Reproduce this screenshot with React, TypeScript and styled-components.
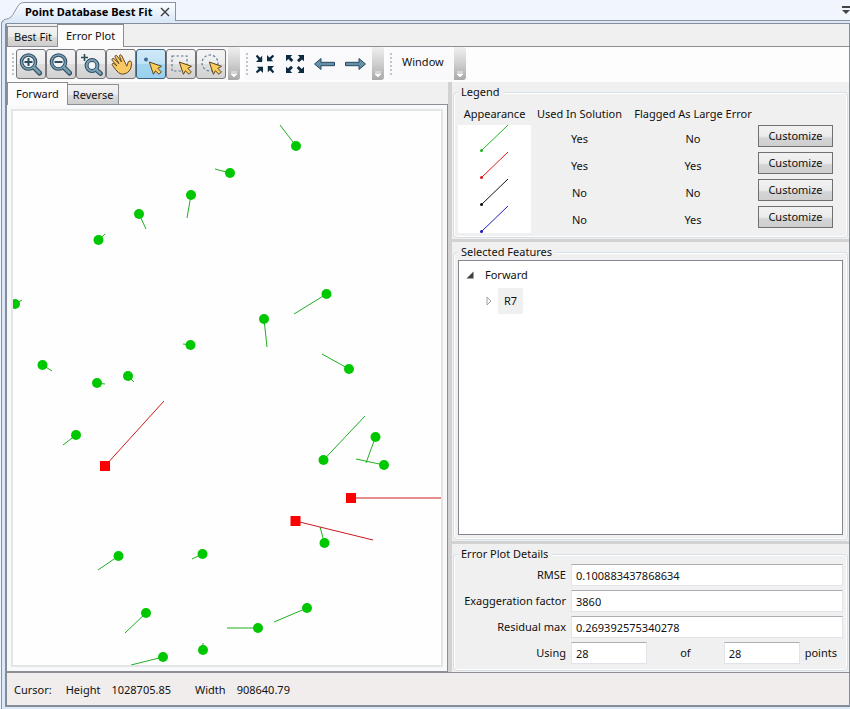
import React from "react";
import styled, { createGlobalStyle, css } from "styled-components";

const Global = createGlobalStyle`
  *, *::before, *::after { box-sizing: border-box; }
  html, body { margin: 0; padding: 0; }
  body, button, input {
    font-family: "Noto Sans", "Open Sans", sans-serif;
    font-size: 11px;
    line-height: 16px;
    color: #111;
  }
  button, input { margin: 0; padding: 0; }
`;

const face = "#f0f0f0";
const line = "#8c8e94";

const Page = styled.div`
  display: flex;
  flex-direction: column;
  height: 100vh;
  min-height: 600px;
  background: #f1f5fe;
`;

/* ---------- document tab strip ---------- */

const DocStrip = styled.div`
  display: flex;
  align-items: flex-end;
  justify-content: space-between;
  height: 20px;
  padding-left: 4px;
  z-index: 1;
`;

const DocTab = styled.div`
  display: flex;
  align-items: flex-end;
  height: 19px;
  margin-bottom: -1px;
`;

const DocTabBody = styled.div`
  display: flex;
  align-items: center;
  gap: 8px;
  height: 19px;
  margin-left: -3px;
  padding-right: 5px;
  border: solid #8a92a6;
  border-width: 1px 1px 0 0;
  background: linear-gradient(#fbfdff, #dce8f8);
  font-weight: 700;
  color: #000;
  white-space: nowrap;
`;

const BareButton = styled.button`
  display: flex;
  align-items: center;
  justify-content: center;
  border: 0;
  background: none;
`;

const Frame = styled.div`
  display: flex;
  flex: 1;
  min-height: 0;
  margin-left: 1px;
  padding: 2px 0 2px 3px;
  border: solid #8a92a6;
  border-width: 1px 0 0 1px;
  border-top-left-radius: 4px;
  background: #dbe8f8;
`;

const Window = styled.div`
  display: flex;
  flex: 1;
  flex-direction: column;
  min-width: 0;
  border: solid #868c98;
  border-width: 1px 1px 2px 2px;
  border-top-left-radius: 2px;
  background: ${face};
`;

/* ---------- tabs ---------- */

const TabRow = styled.div`
  display: flex;
  align-items: flex-end;
  height: 23px;
  border-bottom: 1px solid ${line};
`;

const Tab = styled.button<{ $active?: boolean }>`
  height: 20px;
  padding: 0 5px;
  border: 1px solid ${line};
  border-bottom: 0;
  background: linear-gradient(#f3f3f3, #ebebeb 50%, #dddddd 50%, #cdcdcd);
  white-space: nowrap;
  ${(p) =>
    p.$active &&
    css`
      height: 23px;
      margin-bottom: -1px;
      padding: 0 8px;
      background: #fcfcfc;
    `}
`;

const TabLead = styled(Tab)`
  margin-right: -1px;
  padding-left: ${(p) => (p.$active ? 8 : 6)}px;
`;

/* ---------- toolbar ---------- */

const ToolTray = styled.div`
  display: flex;
  gap: 4px;
  height: 35px;
  padding: 0 3px 2px;
  background: #fdfdfd;
`;

const ToolGroup = styled.div`
  display: flex;
  align-items: center;
  height: 33px;
  border-radius: 3px;
  background: linear-gradient(#fbfafc, #f9f9fb);
`;

const Grip = styled.span`
  width: 2px;
  height: 22px;
  margin: 0 2px;
  background: repeating-linear-gradient(#c4c4c8 0 2px, transparent 2px 4px);
`;

const Tools = styled.div`
  display: flex;
`;

const ToolButton = styled.button<{ $on?: boolean; $flat?: boolean }>`
  display: flex;
  align-items: center;
  justify-content: center;
  width: 30px;
  height: 30px;
  border: 1px solid #75757a;
  border-radius: 3px;
  background: linear-gradient(#f4f4f4, #ececec 50%, #dedede 50%, #d2d2d2);
  ${(p) =>
    p.$on &&
    css`
      border-color: #3e5f78;
      background: linear-gradient(#cfe9f8, #bfe2f5 50%, #a3d6f0 50%, #98d0ee);
    `}
  ${(p) =>
    p.$flat &&
    css`
      border-color: transparent;
      background: none;
    `}
`;

const OverflowButton = styled.button`
  display: flex;
  align-items: flex-end;
  justify-content: center;
  align-self: stretch;
  width: 12px;
  margin-left: 2px;
  padding-bottom: 2px;
  border: 0;
  border-radius: 0 3px 3px 0;
  background: linear-gradient(#f0f0f0, #cfcfcf 50%, #a9a9a9);
`;

const MenuButton = styled.button`
  align-self: flex-start;
  height: 30px;
  padding: 0 8px;
  border: 0;
  background: none;
`;

/* ---------- main area ---------- */

const Main = styled.div`
  display: grid;
  grid-template-columns: minmax(0, 441fr) 4px minmax(0, 397fr);
  flex: 1;
  min-height: 0;
`;

const PlotSide = styled.div`
  display: flex;
  flex-direction: column;
  min-height: 0;
`;

const PlotPane = styled.div`
  display: flex;
  flex: 1;
  min-height: 0;
  padding: 4px;
  border: solid ${line};
  border-width: 0 1px 1px 0;
  background: #f8f9fa;
`;

const PlotSurface = styled.div`
  flex: 1;
  min-width: 0;
  border: 2px solid #e5e5e5;
  background: #fefefe;
  svg { display: block; width: 100%; height: 100%; }
`;

const Splitter = styled.div`
  min-height: 3px;
  background: #d2d2d2;
`;

const Side = styled.div`
  display: flex;
  flex-direction: column;
  min-height: 0;
`;

const Group = styled.fieldset<{ $grow?: boolean }>`
  display: flex;
  flex-direction: column;
  flex: ${(p) => (p.$grow ? "1" : "none")};
  min-width: 0;
  min-height: 0;
  margin: 2px 1px 1px;
  padding: 0 4px 4px;
  border: 1px solid #d5dfe5;
  border-radius: 4px;
  box-shadow: inset 0 0 0 1px #fff;
  legend {
    height: 16px;
    padding: 0 4px 0 3px;
    background: ${face};
  }
`;

const LegendTable = styled.table`
  width: 375px;
  margin-top: 2px;
  border-collapse: collapse;
  table-layout: fixed;
  th, td { padding: 0; font-weight: 400; text-align: center; white-space: nowrap; }
  th { height: 23px; }
  td { height: 27px; }
  td:first-child { background: #fff; }
  svg { display: block; }
`;

const Push = styled.button`
  display: block;
  width: 75px;
  height: 22px;
  margin-bottom: 5px;
  border: 1px solid #707070;
  background: linear-gradient(#f2f2f2, #ebebeb 50%, #d2d4d6 60%, #cfcfcf);
`;

const Tree = styled.ul`
  flex: 1;
  min-height: 0;
  margin: 0;
  padding: 1px 6px;
  overflow: auto;
  border: 1px solid #828790;
  background: #fff;
  list-style: none;
  ul { margin: 0; padding: 0 0 0 19px; list-style: none; }
`;

const TreeRow = styled.div`
  display: flex;
  align-items: center;
  gap: 5px;
  height: 26px;
`;

const TreeLabel = styled.span<{ $selected?: boolean }>`
  padding: 5px 6px;
  background: ${(p) => (p.$selected ? "#f0f0f0" : "transparent")};
`;

const Toggle = styled(BareButton)`
  width: 9px;
  height: 16px;
`;

const Details = styled.div`
  display: grid;
  grid-template-columns: 108px minmax(0, 1fr);
  gap: 4px 5px;
  padding: 2px 0;
  label { line-height: 22px; text-align: right; white-space: nowrap; }
`;

const Field = styled.input`
  width: 100%;
  height: 22px;
  padding: 0 4px;
  border: 1px solid #e2e3ea;
  border-top-color: #abadb3;
  background: #fff;
`;

const Counts = styled.div`
  display: grid;
  grid-template-columns: 76px 1fr 76px auto;
  align-items: center;
  text-align: center;
  span:last-child { padding: 0 6px 0 5px; }
`;

const StatusBar = styled.footer`
  display: flex;
  align-items: center;
  gap: 14px;
  height: 33px;
  padding: 2px 0 0 7px;
  border-top: 1px solid ${line};
  background: #f0edec;
`;

const StatusPair = styled.div`
  display: flex;
  gap: 11px;
  margin-right: 10px;
`;

/* ---------- icons ---------- */

const ink = "#2c4c60";
const steel = "#7d9fb3";

const Icon = ({ children }: { children: React.ReactNode }) => (
  <svg width="24" height="24" viewBox="0 0 24 24" fill="none" aria-hidden="true">
    {children}
  </svg>
);

const Lens = ({ sign }: { sign: string }) => (
  <Icon>
    <path d="M14.5 15 20.5 21" stroke={ink} strokeWidth="5" strokeLinecap="round" />
    <circle cx="9.5" cy="10" r="7" fill="#eef2f4" stroke={ink} strokeWidth="3.6" />
    <circle cx="9.5" cy="10" r="7" stroke={steel} strokeWidth="1.6" />
    <path d="M14.8 15.2 20.4 20.8" stroke={steel} strokeWidth="2.8" strokeLinecap="round" />
    <path d={sign} stroke={ink} strokeWidth="2" />
  </Icon>
);

const LensBox = () => (
  <Icon>
    <path d="M2 5.500h7M5.500 2v7" stroke={ink} strokeWidth="1.6" />
    <path d="M17 17.500 21.500 21.500" stroke={ink} strokeWidth="4.6" strokeLinecap="round" />
    <circle cx="13" cy="13.500" r="5.4" fill="#f3f5f6" stroke={ink} strokeWidth="4" />
    <circle cx="13" cy="13.500" r="5.4" stroke={steel} strokeWidth="2" />
    <path d="M17 17.500 21.300 21.300" stroke={steel} strokeWidth="2.6" strokeLinecap="round" />
  </Icon>
);

const Hand = () => (
  <Icon>
    <path
      d="M3.6 13.5c-1.3-1.7.4-2.8 1.6-1.7L8 14 3.4 8.6c-1.2-1.6.6-3 1.9-1.6L10 11.6 6.2 5.4c-1-1.8 1-2.8 2-1.3L12.6 10 10.6 4.5c-.6-1.8 1.3-2.5 2.1-.8L16 10.5c.7 1.5 1.3 2.7 1.7 3.7 1-1.4.7-2.6 1.5-4.2.8-1.5 3-1.2 3.3.4.3 1.5-.2 3.2-.6 5.2-.5 2.6-2.6 4.6-4.8 5.7-2.4 1.1-5.6 1.2-7.8-.8-2-1.9-4.1-4.7-5.7-7z"
      fill="#fbc963"
      stroke="#5b4520"
      strokeWidth="1"
      strokeLinejoin="round"
    />
  </Icon>
);

const Arrow = () => (
  <path
    d="M10.3 10 22.5 14.3 18.8 16.4 22.3 19.9 20 22.3 16.4 18.8 14.4 22.3Z"
    fill="#fccb5d"
    stroke="#5b4520"
    strokeWidth="1"
    strokeLinejoin="round"
  />
);

const PickPoint = () => (
  <Icon>
    <circle cx="7" cy="7.5" r="2" fill="#3b6a96" />
    <Arrow />
  </Icon>
);

const PickBox = () => (
  <Icon>
    <path d="M3 4h15v15H3z" stroke="#5f7c93" strokeWidth="1.2" strokeDasharray="2.5 2" />
    <Arrow />
  </Icon>
);

const PickCircle = () => (
  <Icon>
    <circle cx="11" cy="11" r="8" stroke="#5f7c93" strokeWidth="1.2" strokeDasharray="2.5 2" />
    <Arrow />
  </Icon>
);

const inArrow = "M2.8 4.2 4.2 2.8 7.2 5.8 9.2 3.8V10H3L5.400 7.600Z";
const outArrow = "M3 3H9.200L7.400 5 10.300 8 8.300 10 5.300 7.100 3 9.200Z";

const FourArrows = ({ d }: { d: string }) => (
  <Icon>
    {[0, 90, 180, 270].map((a) => (
      <path key={a} d={d} fill="#0b2c40" transform={`rotate(${a} 12 12)`} />
    ))}
  </Icon>
);

const LongArrow = ({ flip }: { flip?: boolean }) => (
  <Icon>
    <path
      d="M1.5 12 8 6.5V10.3H21.5V13.7H8V17.5Z"
      fill="#6590aa"
      stroke="#28485c"
      strokeWidth="1"
      strokeLinejoin="round"
      transform={flip ? "rotate(180 12 12)" : undefined}
    />
  </Icon>
);

const Overflow = () => (
  <OverflowButton aria-label="More tools">
    <svg width="8" height="7" viewBox="0 0 8 7" aria-hidden="true">
      <path d="M1 1h6M1 3h6L4 6z" fill="#fff" stroke="#fff" strokeWidth=".8" />
    </svg>
  </OverflowButton>
);

/* ---------- plot data: marker x, y, residual end x, y ---------- */

const points: [number, number, number, number][] = [
  [283, 35, 267, 14], [217, 62, 202, 58], [178, 84, 174, 107], [126, 103, 133, 118],
  [85.5, 129, 92, 123], [2, 193, 9, 189], [313.5, 183, 281, 203], [251, 208, 254, 236],
  [177.5, 234, 170, 233], [29.5, 254, 39, 260], [84, 272, 92, 273], [115, 265, 121, 271],
  [336, 258, 309, 243], [63, 324, 50, 334], [310.5, 349, 352, 305], [362.5, 326, 353, 352],
  [371, 354, 343, 348], [311.5, 432, 307, 416], [105.5, 445, 85, 459], [189.5, 443, 179, 448],
  [133, 502, 112, 522], [294, 497, 261, 511], [245, 517, 214, 517], [190, 539, 190, 532],
  [150, 546, 118, 554],
];

const outliers: [number, number, number, number][] = [
  [92, 355, 151, 290], [338, 387, 428, 387], [282.5, 410, 360, 429],
];

const Plot = () => (
  <svg viewBox="0 0 428 555" preserveAspectRatio="xMinYMin slice" role="img" aria-label="Error plot">
    {points.map(([x, y, u, v], i) => (
      <g key={i}>
        <line x1={x} y1={y} x2={u} y2={v} stroke="#1fae1f" />
        <circle cx={x} cy={y} r="5" fill="#00c800" />
      </g>
    ))}
    {outliers.map(([x, y, u, v], i) => (
      <g key={i}>
        <line x1={x} y1={y} x2={u} y2={v} stroke="#cc1a1a" />
        <rect x={x - 5} y={y - 5} width="10" height="10" fill="#ff0000" />
      </g>
    ))}
  </svg>
);

const appearances = [
  { color: "#1db41d", used: "Yes", large: "No" },
  { color: "#e01818", used: "Yes", large: "Yes" },
  { color: "#111111", used: "No", large: "No" },
  { color: "#1a1ac0", used: "No", large: "Yes" },
];

export default function App() {
  return (
    <Page>
      <Global />
      <DocStrip>
        <DocTab>
          <svg width="24" height="19" viewBox="0 0 24 19" aria-hidden="true">
            <defs>
              <linearGradient id="tab" x1="0" y1="0" x2="0" y2="1">
                <stop offset="0" stopColor="#fbfdff" />
                <stop offset="1" stopColor="#dce8f8" />
              </linearGradient>
            </defs>
            <path d="M0 19V18C7 17 8 14 11 9S15 .5 21 .5H24V19Z" fill="url(#tab)" />
            <path d="M0 17.5C7 17 8 14 11 9S15 .5 21 .5H24" fill="none" stroke="#8a92a6" />
          </svg>
          <DocTabBody>
            Point Database Best Fit
            <BareButton aria-label="Close">
              <svg width="10" height="10" viewBox="0 0 10 10" aria-hidden="true">
                <path d="M1 1 9 9M9 1 1 9" stroke="#444" strokeWidth="1.5" />
              </svg>
            </BareButton>
          </DocTabBody>
        </DocTab>
        <BareButton aria-label="Open documents">
          <svg width="9" height="16" viewBox="0 0 9 16" aria-hidden="true">
            <path d="M1 2h8v2H1zM1 6h8L5 10z" fill="#444" />
          </svg>
        </BareButton>
      </DocStrip>
      <Frame>
        <Window>
          <TabRow>
            <TabLead>Best Fit</TabLead>
            <Tab $active>Error Plot</Tab>
          </TabRow>
          <ToolTray>
            <ToolGroup>
              <Grip />
              <Tools>
                <ToolButton aria-label="Zoom in"><Lens sign="M5.5 10h8M9.5 6v8" /></ToolButton>
                <ToolButton aria-label="Zoom out"><Lens sign="M5.5 10h8" /></ToolButton>
                <ToolButton aria-label="Zoom to box"><LensBox /></ToolButton>
                <ToolButton aria-label="Pan"><Hand /></ToolButton>
                <ToolButton aria-label="Select point" $on><PickPoint /></ToolButton>
                <ToolButton aria-label="Select by box"><PickBox /></ToolButton>
                <ToolButton aria-label="Select by circle"><PickCircle /></ToolButton>
              </Tools>
              <Overflow />
            </ToolGroup>
            <ToolGroup>
              <Grip />
              <Tools>
                <ToolButton aria-label="Shrink" $flat><FourArrows d={inArrow} /></ToolButton>
                <ToolButton aria-label="Expand" $flat><FourArrows d={outArrow} /></ToolButton>
                <ToolButton aria-label="Previous view" $flat><LongArrow /></ToolButton>
                <ToolButton aria-label="Next view" $flat><LongArrow flip /></ToolButton>
              </Tools>
              <Overflow />
            </ToolGroup>
            <ToolGroup>
              <Grip />
              <MenuButton>Window</MenuButton>
              <Overflow />
            </ToolGroup>
          </ToolTray>
          <Main>
            <PlotSide>
              <TabRow>
                <TabLead $active>Forward</TabLead>
                <Tab>Reverse</Tab>
              </TabRow>
              <PlotPane>
                <PlotSurface><Plot /></PlotSurface>
              </PlotPane>
            </PlotSide>
            <Splitter />
            <Side>
              <Group>
                <legend>Legend</legend>
                <LegendTable>
                  <colgroup>
                    <col width="73" />
                    <col width="97" />
                    <col width="130" />
                    <col width="75" />
                  </colgroup>
                  <thead>
                    <tr>
                      <th>Appearance</th>
                      <th>Used In Solution</th>
                      <th>Flagged As Large Error</th>
                      <th aria-label="Action" />
                    </tr>
                  </thead>
                  <tbody>
                    {appearances.map((a) => (
                      <tr key={a.color}>
                        <td>
                          <svg width="73" height="27" viewBox="0 0 73 27" aria-hidden="true">
                            <path d="M23 26 50 0" stroke={a.color} />
                            <circle cx="23.5" cy="25.5" r="1.5" fill={a.color} />
                          </svg>
                        </td>
                        <td>{a.used}</td>
                        <td>{a.large}</td>
                        <td><Push>Customize</Push></td>
                      </tr>
                    ))}
                  </tbody>
                </LegendTable>
              </Group>
              <Splitter />
              <Group $grow>
                <legend>Selected Features</legend>
                <Tree>
                  <li>
                    <TreeRow>
                      <Toggle aria-label="Collapse Forward">
                        <svg width="8" height="8" viewBox="0 0 8 8" aria-hidden="true">
                          <path d="M7.5 .5V7.5H.5z" fill="#404040" />
                        </svg>
                      </Toggle>
                      <TreeLabel>Forward</TreeLabel>
                    </TreeRow>
                    <ul>
                      <li>
                        <TreeRow>
                          <Toggle aria-label="Expand R7">
                            <svg width="6" height="10" viewBox="0 0 6 10" aria-hidden="true">
                              <path d="M1 1V9L5 5z" fill="#fff" stroke="#a0a0a0" />
                            </svg>
                          </Toggle>
                          <TreeLabel $selected>R7</TreeLabel>
                        </TreeRow>
                      </li>
                    </ul>
                  </li>
                </Tree>
              </Group>
              <Splitter />
              <Group>
                <legend>Error Plot Details</legend>
                <Details>
                  <label htmlFor="rmse">RMSE</label>
                  <Field id="rmse" defaultValue="0.100883437868634" />
                  <label htmlFor="factor">Exaggeration factor</label>
                  <Field id="factor" defaultValue="3860" />
                  <label htmlFor="residual">Residual max</label>
                  <Field id="residual" defaultValue="0.269392575340278" />
                  <label htmlFor="using">Using</label>
                  <Counts>
                    <Field id="using" defaultValue="28" />
                    <span>of</span>
                    <Field aria-label="Total points" defaultValue="28" />
                    <span>points</span>
                  </Counts>
                </Details>
              </Group>
            </Side>
          </Main>
          <StatusBar>
            <span>Cursor:</span>
            <StatusPair><span>Height</span><span>1028705.85</span></StatusPair>
            <StatusPair><span>Width</span><span>908640.79</span></StatusPair>
          </StatusBar>
        </Window>
      </Frame>
    </Page>
  );
}
